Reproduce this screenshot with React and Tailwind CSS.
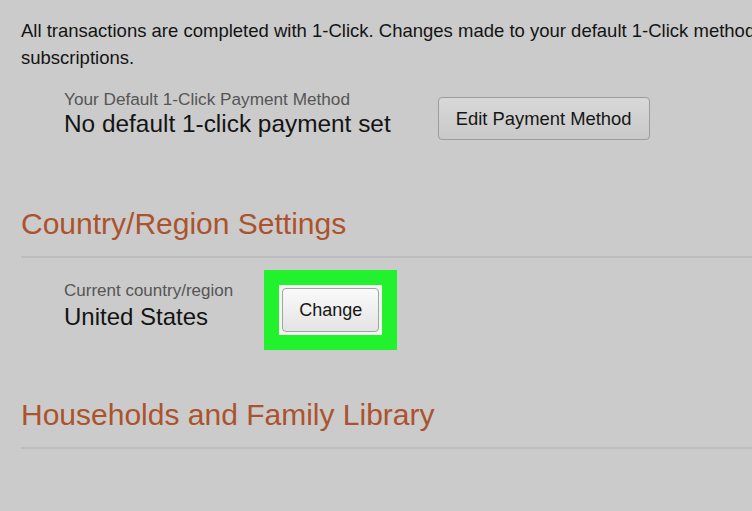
export default function App() {
  return (
    <div className="w-[752px] h-[511px] overflow-hidden bg-[#cbcbcb] pl-[21px] pt-[17px] font-['Liberation_Sans',Arial,sans-serif] text-[#141414]">
      {/* 1-Click intro */}
      <p className="text-[18.5px] leading-[27px] whitespace-nowrap">
        All transactions are completed with 1-Click. Changes made to your default 1-Click method will apply to
        <br />
        subscriptions.
      </p>

      <div className="mt-[18px] ml-[43px] flex items-start gap-[47px]">
        <div>
          <div className="text-[17.2px] leading-[20px] text-[#555]">Your Default 1-Click Payment Method</div>
          <div className="text-[24.4px] leading-[30px]">No default 1-click payment set</div>
        </div>
        <button className="mt-[8px] h-[43px] px-[17px] rounded-[4px] border border-[#9c9c9c] bg-gradient-to-b from-[#d8d8d8] to-[#c9c9c9] text-[18.4px] text-[#161616]">
          Edit Payment Method
        </button>
      </div>

      {/* Country / Region */}
      <h2 className="mt-[66px] pb-[14px] border-b-2 border-[#bdbdbd] text-[30px] leading-[36px] text-[#ab532e]">
        Country/Region Settings
      </h2>

      <div className="mt-[12px] ml-[43px] flex items-start gap-[31px]">
        <div className="mt-[11px]">
          <div className="text-[17px] leading-[20px] text-[#555]">Current country/region</div>
          <div className="text-[24px] leading-[31px]">United States</div>
        </div>
        <div className="bg-[#22f22e] p-[15px]">
          <div className="bg-[#f3f3f3] p-[3px]">
            <button className="h-[44px] px-[16px] rounded-[4px] border border-[#a3a3a3] bg-gradient-to-b from-[#fafafa] to-[#e4e4e4] text-[18px] text-[#161616]">
              Change
            </button>
          </div>
        </div>
      </div>

      <h2 className="mt-[47px] pb-[14px] border-b-2 border-[#bdbdbd] text-[30px] leading-[36px] text-[#ab532e]">
        Households and Family Library
      </h2>
    </div>
  );
}
